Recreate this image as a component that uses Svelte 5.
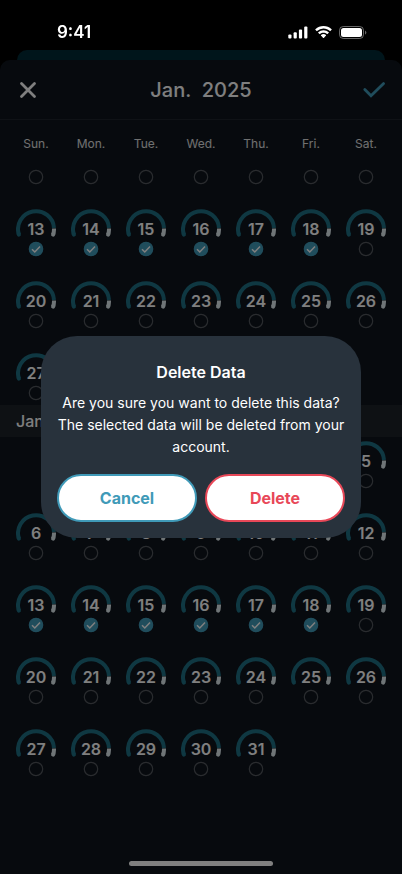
<script lang="ts">
	interface Day {
		date: number;
		checked: boolean;
	}

	const weekdays = ['Sun.', 'Mon.', 'Tue.', 'Wed.', 'Thu.', 'Fri.', 'Sat.'];
	const title = 'Jan.  2025';
	const sectionTitle = 'Jan. 2025';

	function range(from: number, to: number): Day[] {
		const days: Day[] = [];
		for (let date = from; date <= to; date++) {
			days.push({ date, checked: date >= 13 && date <= 18 });
		}
		return days;
	}

	let upper = $state(range(13, 27));
	let lower = $state(range(1, 31));
	let open = $state(true);
</script>

{#snippet tick(day: Day | null, label: string)}
	<label class="tick">
		{#if day}
			<input type="checkbox" aria-label={label} bind:checked={day.checked} />
		{:else}
			<input type="checkbox" aria-label={label} />
		{/if}
		<svg viewBox="0 0 16 16" width="16" height="16" aria-hidden="true">
			<circle cx="8" cy="8" r="6.7" />
			<path d="M4 8.2 6.8 11 12 5.4" />
		</svg>
	</label>
{/snippet}

{#snippet cell(day: Day)}
	<div class="cell" class:first={day.date === 1}>
		<div class="gauge">
			<svg viewBox="0 0 40 30" width="40" height="30" aria-hidden="true">
				<path class="rest" d="M38 19.5A18 18 0 0 1 37.1 25.7" />
				<path class="rest cap" d="M37.3 25 37.1 25.7" />
				<path class="arc" d="M2.9 25.7A18 18 0 1 1 38 19" />
				<path class="arc cap" d="M2.9 25.7 2.7 25" />
			</svg>
			<span>{day.date}</span>
		</div>
		{@render tick(day, `Select day ${day.date}`)}
	</div>
{/snippet}

<div class="screen">
	<div class="status">
		<span class="time">9:41</span>
		<div class="levels">
			<svg viewBox="0 0 20 13" width="20" height="13" aria-hidden="true">
				<rect x="0.3" y="8.5" width="3.2" height="4" rx="1" />
				<rect x="5.6" y="6.3" width="3.2" height="6.2" rx="1" />
				<rect x="10.9" y="3.5" width="3.2" height="9" rx="1" />
				<rect x="16.2" y="0.6" width="3.2" height="11.9" rx="1" />
			</svg>
			<svg viewBox="0 0 17 13" width="17" height="13" aria-hidden="true">
				<path d="M8.5 2.6c2.4 0 4.7.9 6.4 2.5.1.1.3.1.5 0l1.2-1.3c.2-.2.2-.4 0-.5a11.8 11.8 0 0 0-16.2 0c-.2.1-.2.3 0 .5l1.2 1.3c.1.1.3.1.5 0A9.3 9.3 0 0 1 8.5 2.6Z" />
				<path d="M8.5 6.7c1.3 0 2.6.5 3.5 1.4.2.1.4.1.5 0l1.3-1.3c.1-.2.1-.4 0-.5a7.7 7.7 0 0 0-10.6 0c-.1.1-.1.3 0 .5l1.3 1.3c.1.1.3.1.5 0 .9-.9 2.2-1.4 3.5-1.4Z" />
				<path d="M11 9.6c.1-.2.1-.4 0-.5a3.9 3.9 0 0 0-5 0c-.1.1-.1.3 0 .5l2.2 2.3c.2.1.4.1.6 0Z" />
			</svg>
			<svg viewBox="0 0 28 13" width="28" height="13" aria-hidden="true">
				<rect class="shell" x="0.5" y="0.5" width="24" height="12" rx="3.8" />
				<path class="nub" d="M26 4.5v4.1c.8-.3 1.4-1.2 1.4-2s-.6-1.7-1.4-2.1Z" />
				<rect x="2" y="2" width="21" height="9" rx="2.5" />
			</svg>
		</div>
	</div>

	<div class="behind"></div>

	<main class="sheet">
		<header>
			<button type="button" aria-label="Close">
				<svg viewBox="0 0 24 24" width="24" height="24" aria-hidden="true">
					<path class="cross" d="M5.5 5.5 18.5 18.5M18.5 5.5 5.5 18.5" />
				</svg>
			</button>
			<h1>{title}</h1>
			<button type="button" aria-label="Done">
				<svg viewBox="0 0 24 24" width="24" height="24" aria-hidden="true">
					<path class="done" d="M2.8 11.6 9 17.8 21.6 5.6" />
				</svg>
			</button>
		</header>

		<div class="row weekdays">
			{#each weekdays as name}
				<span>{name}</span>
			{/each}
		</div>

		<div class="row peek">
			{#each weekdays as name}
				{@render tick(null, `Select ${name}`)}
			{/each}
		</div>

		<div class="row month">
			{#each upper as day}
				{@render cell(day)}
			{/each}
		</div>

		<h2>{sectionTitle}</h2>

		<div class="row month">
			{#each lower as day}
				{@render cell(day)}
			{/each}
		</div>

		<div class="home"></div>
	</main>

	{#if open}
		<div class="backdrop">
			<div class="dialog" role="alertdialog" aria-modal="true" aria-labelledby="dialog-title">
				<h3 id="dialog-title">Delete Data</h3>
				<p>
					Are you sure you want to delete this data? The selected data will be deleted from your
					account.
				</p>
				<div class="actions">
					<button type="button" class="cancel" onclick={() => (open = false)}>Cancel</button>
					<button type="button" class="delete" onclick={() => (open = false)}>Delete</button>
				</div>
			</div>
		</div>
	{/if}
</div>

<style>
	:global(body) {
		background: #000;
	}

	.screen {
		display: flex;
		flex-direction: column;
		min-height: 100vh;
		background: #000;
		color: #fff;
		font-family: Inter, 'Liberation Sans', sans-serif;
	}

	h1,
	h2,
	h3,
	p {
		margin: 0;
	}

	button {
		font-family: inherit;
		cursor: pointer;
	}

	/* Stays bright above the backdrop. */
	.status {
		position: relative;
		z-index: 2;
		display: flex;
		align-items: center;
		justify-content: space-between;
		height: 36px;
		padding: 14px 35px 0 57px;
	}

	.time {
		font-size: 17px;
		font-weight: 600;
		line-height: 22px;
	}

	.levels {
		display: flex;
		align-items: center;
		gap: 7px;
		fill: #fff;
	}

	.shell {
		fill: none;
		stroke: #fff;
		opacity: 0.4;
	}

	.nub {
		opacity: 0.4;
	}

	.behind {
		height: 10px;
		margin: 0 17px;
		border-radius: 10px 10px 0 0;
		background: #002a36;
	}

	.sheet {
		display: flex;
		flex: 1;
		flex-direction: column;
		border-radius: 10px 10px 0 0;
		background: #0e151d;
	}

	header {
		display: flex;
		align-items: center;
		justify-content: space-between;
		height: 59px;
		padding: 0 16px;
		border-bottom: 1px solid #1e252c;
	}

	header button {
		display: flex;
		padding: 0;
		border: 0;
		background: none;
	}

	header path {
		fill: none;
		stroke-linecap: round;
		stroke-width: 2.8;
	}

	.cross {
		stroke: #fff;
	}

	.done {
		stroke: #409ab8;
	}

	h1 {
		font-size: 20px;
		font-weight: 500;
		line-height: 24px;
		white-space: pre;
	}

	.row {
		display: grid;
		grid-template-columns: repeat(7, 40px);
		justify-content: space-between;
		justify-items: center;
		padding: 0 16px;
	}

	.weekdays {
		padding-top: 16px;
		font-size: 12px;
		line-height: 16px;
		color: #e0e0e0;
	}

	.peek {
		padding-top: 17px;
	}

	.month {
		row-gap: 16px;
	}

	.peek + .month {
		padding-top: 20px;
	}

	.cell {
		display: flex;
		flex-direction: column;
		align-items: center;
		height: 56px;
	}

	.cell.first {
		grid-column-start: 3;
	}

	.gauge {
		display: grid;
		justify-items: center;
		padding-top: 4px;
	}

	.gauge > * {
		grid-area: 1 / 1;
	}

	.gauge svg {
		fill: none;
		stroke-width: 4;
	}

	.gauge span {
		padding-top: 11px;
		font-size: 16px;
		font-weight: 600;
		line-height: 19px;
	}

	.arc {
		stroke: #1f7085;
	}

	.rest {
		stroke: #dfeaee;
	}

	.cap {
		stroke-linecap: round;
	}

	.tick {
		display: grid;
		margin-top: 2px;
	}

	.peek .tick {
		margin-top: 0;
	}

	.tick > * {
		grid-area: 1 / 1;
	}

	.tick input {
		width: 16px;
		height: 16px;
		margin: 0;
		border-radius: 50%;
		appearance: none;
	}

	.tick svg {
		fill: none;
		pointer-events: none;
	}

	.tick circle {
		stroke: #54585e;
		stroke-width: 1.2;
	}

	.tick path {
		visibility: hidden;
		stroke: #fff;
		stroke-width: 1.5;
	}

	.tick input:checked + svg circle {
		fill: #409ab8;
		stroke: #409ab8;
	}

	.tick input:checked + svg path {
		visibility: visible;
	}

	h2 {
		padding: 0 16px;
		background: #1c2329;
		font-size: 16px;
		font-weight: 500;
		line-height: 32px;
	}

	.home {
		align-self: center;
		width: 36%;
		height: 5px;
		margin: auto 0 8px;
		border-radius: 3px;
		background: #fff;
	}

	.backdrop {
		position: fixed;
		inset: 0;
		z-index: 1;
		display: grid;
		place-items: center;
		padding: 0 16px;
		background: rgba(0, 0, 0, 0.5);
	}

	.dialog {
		box-sizing: border-box;
		width: 100%;
		max-width: 320px;
		padding: 24px 16px 16px;
		border-radius: 36px;
		background: #28323c;
		text-align: center;
	}

	h3 {
		font-size: 16px;
		font-weight: 600;
		line-height: 24px;
	}

	p {
		margin-top: 8px;
		font-size: 14px;
		line-height: 22px;
	}

	.actions {
		display: grid;
		grid-template-columns: 1fr 1fr;
		gap: 8px;
		margin-top: 16px;
	}

	.actions button {
		height: 48px;
		border: 2px solid;
		border-radius: 24px;
		background: #fff;
		font-size: 16px;
		font-weight: 700;
	}

	.cancel {
		color: #409ab8;
	}

	.delete {
		color: #e84858;
	}
</style>
